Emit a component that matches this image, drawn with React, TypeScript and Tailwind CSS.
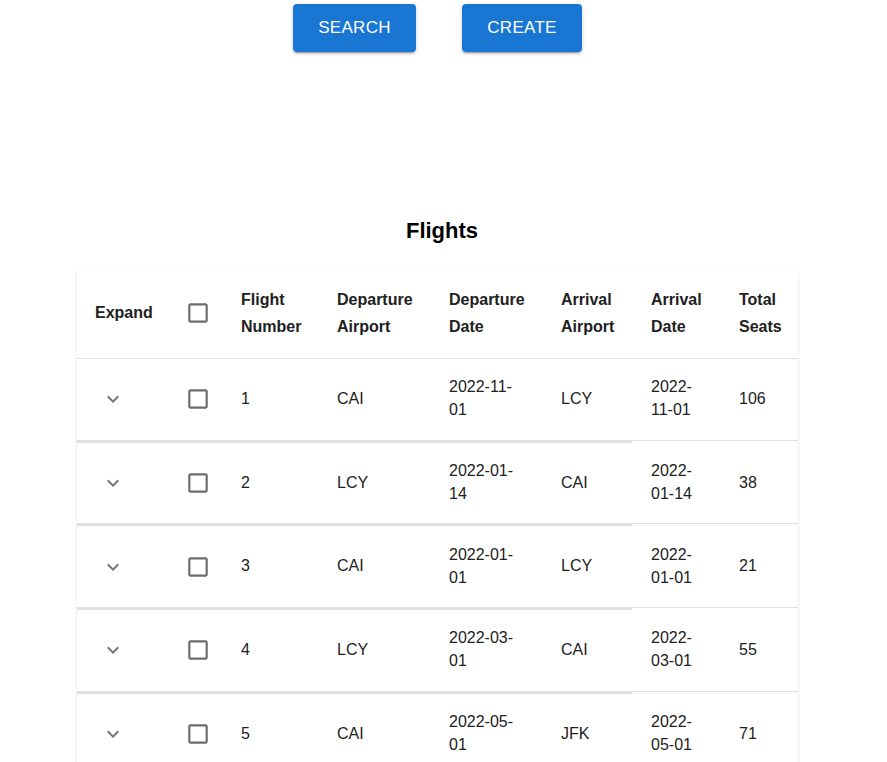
import React from "react";

const font = { fontFamily: '"Liberation Sans", Arial, Helvetica, sans-serif' };

type Row = {
  n: string;
  dep: string;
  depDate: [string, string];
  arr: string;
  arrDate: [string, string];
  seats: string;
};

const rows: Row[] = [
  { n: "1", dep: "CAI", depDate: ["2022-11-", "01"], arr: "LCY", arrDate: ["2022-", "11-01"], seats: "106" },
  { n: "2", dep: "LCY", depDate: ["2022-01-", "14"], arr: "CAI", arrDate: ["2022-", "01-14"], seats: "38" },
  { n: "3", dep: "CAI", depDate: ["2022-01-", "01"], arr: "LCY", arrDate: ["2022-", "01-01"], seats: "21" },
  { n: "4", dep: "LCY", depDate: ["2022-03-", "01"], arr: "CAI", arrDate: ["2022-", "03-01"], seats: "55" },
  { n: "5", dep: "CAI", depDate: ["2022-05-", "01"], arr: "JFK", arrDate: ["2022-", "05-01"], seats: "71" },
];

const cols = "grid grid-cols-[96px_52px_96px_112px_112px_87px_91px_75px]";

function Checkbox() {
  return (
    <svg width="26" height="26" viewBox="0 0 24 24" className="block">
      <path
        fill="#6b6b6b"
        d="M19 5v14H5V5h14m0-2H5c-1.11 0-2 .9-2 2v14c0 1.1.89 2 2 2h14c1.1 0 2-.9 2-2V5c0-1.1-.9-2-2-2z"
      />
    </svg>
  );
}

function Chevron() {
  return (
    <svg width="24" height="24" viewBox="0 0 24 24" className="block">
      <path fill="#757575" d="M7.41 8.59 12 13.17l4.59-4.58L18 10l-6 6-6-6 1.41-1.41z" />
    </svg>
  );
}

function Two({ a, b }: { a: string; b: string }) {
  return (
    <div className="flex flex-col">
      <span className="whitespace-nowrap">{a}</span>
      <span className="whitespace-nowrap">{b}</span>
    </div>
  );
}

export default function App() {
  return (
    <div className="h-[762px] w-[887px] overflow-hidden bg-white text-[#212121]" style={font}>
      <div className="w-[875px]">
        <div className="flex justify-center gap-[46px] pt-[4px]">
          <button className="h-[48px] w-[123px] rounded-[4px] bg-[#1976d2] text-[17px] tracking-[0.3px] text-white shadow-[0_3px_1px_-2px_rgba(0,0,0,0.2),0_2px_2px_0_rgba(0,0,0,0.14),0_1px_5px_0_rgba(0,0,0,0.12)]">
            SEARCH
          </button>
          <button className="h-[48px] w-[120px] rounded-[4px] bg-[#1976d2] text-[17px] tracking-[0.3px] text-white shadow-[0_3px_1px_-2px_rgba(0,0,0,0.2),0_2px_2px_0_rgba(0,0,0,0.14),0_1px_5px_0_rgba(0,0,0,0.12)]">
            CREATE
          </button>
        </div>
      </div>

      <div className="mt-[163px] flex w-[884px] justify-center">
        <h2 className="h-[32px] text-[22px] font-bold leading-[32px] text-black">Flights</h2>
      </div>

      <div className="ml-[77px] mt-[21px] w-[721px] rounded-[4px] bg-white shadow-[0_2px_1px_-1px_rgba(0,0,0,0.2),0_1px_1px_0_rgba(0,0,0,0.14),0_1px_3px_0_rgba(0,0,0,0.12)]">
        <div className={`${cols} h-[91px] border-b border-[#e0e0e0] text-[16px] font-bold leading-[27.4px]`}>
          <div className="flex items-center pl-[18px]">Expand</div>
          <div className="flex items-center pl-[12px]">
            <Checkbox />
          </div>
          <div className="flex items-center pl-[16px]">
            <Two a="Flight" b="Number" />
          </div>
          <div className="flex items-center pl-[16px]">
            <Two a="Departure" b="Airport" />
          </div>
          <div className="flex items-center pl-[16px]">
            <Two a="Departure" b="Date" />
          </div>
          <div className="flex items-center pl-[16px]">
            <Two a="Arrival" b="Airport" />
          </div>
          <div className="flex items-center pl-[19px]">
            <Two a="Arrival" b="Date" />
          </div>
          <div className="flex items-center pl-[16px]">
            <Two a="Total" b="Seats" />
          </div>
        </div>

        {rows.map((r) => (
          <div key={r.n}>
            <div className={`${cols} h-[81.67px] border-b border-[#e0e0e0] text-[16px] leading-[22.9px]`}>
              <div className="flex items-center pl-[24px]">
                <Chevron />
              </div>
              <div className="flex items-center pl-[12px]">
                <Checkbox />
              </div>
              <div className="flex items-center pl-[16px]">{r.n}</div>
              <div className="flex items-center pl-[16px]">{r.dep}</div>
              <div className="flex items-center pl-[16px]">
                <Two a={r.depDate[0]} b={r.depDate[1]} />
              </div>
              <div className="flex items-center pl-[16px]">{r.arr}</div>
              <div className="flex items-center pl-[19px]">
                <Two a={r.arrDate[0]} b={r.arrDate[1]} />
              </div>
              <div className="flex items-center pl-[16px]">{r.seats}</div>
            </div>
            <div className="flex h-[2px]">
              <div className="h-[2px] w-[555px] bg-[#e0e0e0]" />
            </div>
          </div>
        ))}
      </div>
    </div>
  );
}
